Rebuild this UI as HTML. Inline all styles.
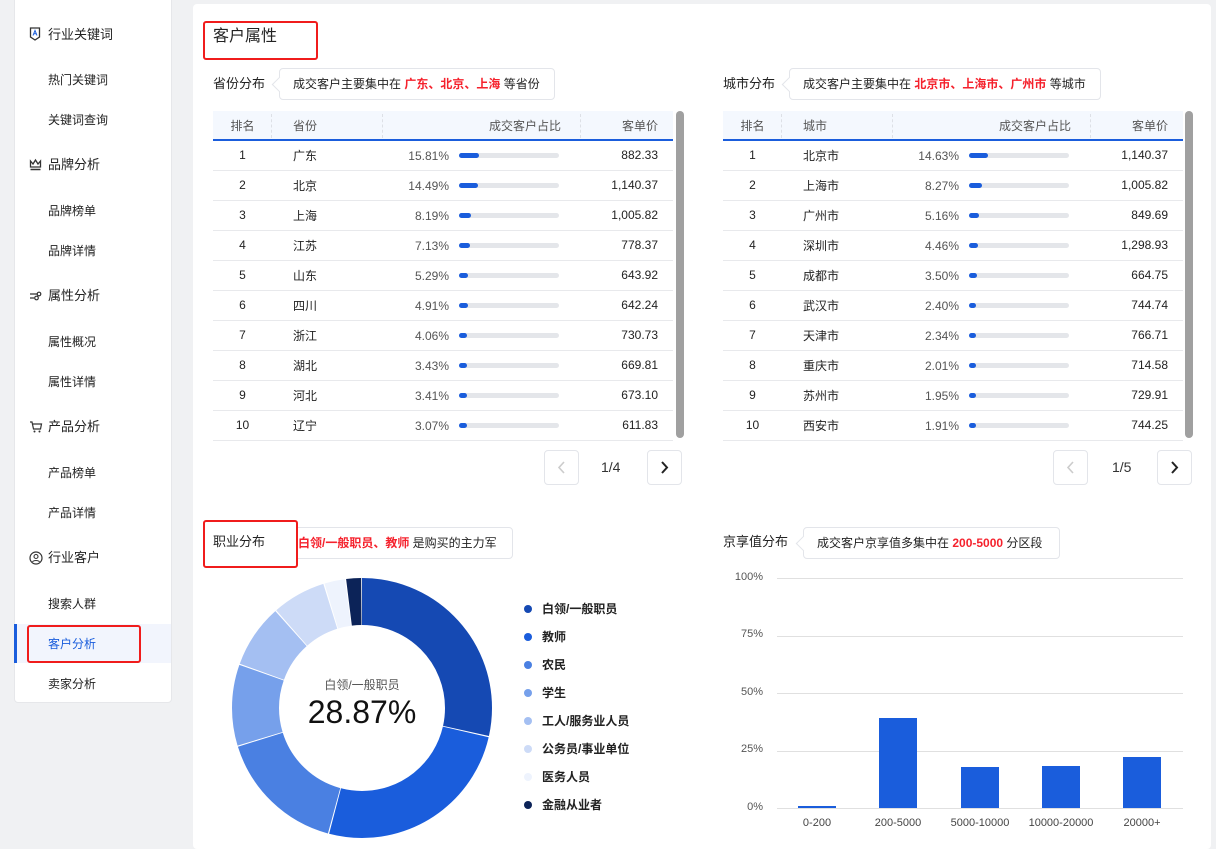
<!DOCTYPE html>
<html><head><meta charset="utf-8">
<style>
*{margin:0;padding:0;box-sizing:border-box}
body{width:1216px;height:840px;background:#f0f1f3;font-family:"Liberation Sans","Noto Sans CJK SC",sans-serif;color:#222;position:relative;overflow:hidden;font-size:12px}
.abs{position:absolute}
.side{position:absolute;left:14px;top:-4px;width:158px;height:707px;background:#fff;border-radius:4px;border:1px solid #e6e7ea}
.g{position:absolute;left:48px;font-size:13px;color:#222;line-height:16px}
.s{position:absolute;left:48px;font-size:12px;color:#222;line-height:16px}
.ic{position:absolute;left:30px;font-size:12px;color:#222;line-height:16px}
.main{position:absolute;left:193px;top:4px;width:1018px;height:845px;background:#fff;border-radius:4px}
.red{position:absolute;border:2px solid #f01c1c;border-radius:3px}
.lab{position:absolute;font-size:13px;color:#222;line-height:16px}
.tip{position:absolute;height:32px;border:1px solid #e3e5ea;border-radius:4px;background:#fff;font-size:12px;line-height:30px;padding-left:13px;color:#222;white-space:nowrap}
.tip:before{content:"";position:absolute;left:-6px;top:10px;width:10px;height:10px;background:#fff;border-left:1px solid #e3e5ea;border-bottom:1px solid #e3e5ea;transform:rotate(45deg)}
.tip b{color:#f5222d;font-weight:bold}
table{border-collapse:collapse;position:absolute;table-layout:fixed;font-size:12px}
th{height:29px;background:#f4f8fe;font-weight:normal;color:#555;border-bottom:2px solid #1a5ddc;position:relative}
td{height:30px;border-bottom:1px solid #e8e9ec;color:#222}
th.sep:after{content:"";position:absolute;right:0;top:3px;height:24px;border-right:1px dashed #dde0e6}
.c0{text-align:center}
.c1{text-align:left;padding-left:21px}
.c2{text-align:right;padding-right:20px}
.c3{text-align:right;padding-right:15px}
td.c2{padding:0;position:relative}
.pct{position:absolute;right:132px;top:8px;color:#555}
.bar{position:absolute;left:76px;top:12px;width:100px;height:5px;background:#e4e6ea;border-radius:3px}
.bar i{display:block;height:5px;background:#1a5ddc;border-radius:3px}
.sb{position:absolute;width:8px;background:#a0a0a0;border-radius:4px}
.pg{position:absolute;width:35px;height:35px;border:1px solid #e3e5ea;border-radius:4px;background:#fff}
.pgt{position:absolute;font-size:14px;color:#333}
.leg{position:absolute;left:524px;font-size:12px;font-weight:bold;color:#222;line-height:14px}
.leg i{position:absolute;left:0;top:3px;width:8px;height:8px;border-radius:50%}
.leg span{margin-left:18px}
.yl{position:absolute;width:50px;text-align:right;font-size:11px;color:#555;left:713px}
.gl{position:absolute;left:777px;width:406px;height:1px;background:#e0e0e0}
.xb{position:absolute;width:38px;background:#1a5ddc}
.xl{position:absolute;width:90px;text-align:center;font-size:11px;color:#444;top:817px}
</style></head><body>
<div class="side"></div>
<svg class="abs" style="left:29px;top:27px" width="12" height="14" viewBox="0 0 12 14"><path d="M1.5 1h9v9l-4.5 3-4.5-3z" fill="none" stroke="#333" stroke-width="1.3"/><path d="M4 8.5l2-5 2 5M4.8 6.8h2.4" fill="none" stroke="#1a5ddc" stroke-width="1"/></svg>
<div class="g" style="top:27px">行业关键词</div>
<div class="s" style="top:72px">热门关键词</div>
<div class="s" style="top:112px">关键词查询</div>
<svg class="abs" style="left:29px;top:158px" width="13" height="13" viewBox="0 0 13 13"><path d="M1.5 3l2.5 3 2.5-4 2.5 4 2.5-3v6h-10z" fill="none" stroke="#333" stroke-width="1.3"/><path d="M1.5 11.5h10" stroke="#333" stroke-width="1.5"/></svg>
<div class="g" style="top:157px">品牌分析</div>
<div class="s" style="top:203px">品牌榜单</div>
<div class="s" style="top:243px">品牌详情</div>
<svg class="abs" style="left:29px;top:290px" width="13" height="12" viewBox="0 0 13 12"><path d="M1 4h7M1 8h4" stroke="#333" stroke-width="1.3"/><circle cx="10" cy="4" r="1.8" fill="none" stroke="#333" stroke-width="1.2"/><circle cx="7.5" cy="8" r="1.8" fill="none" stroke="#333" stroke-width="1.2"/></svg>
<div class="g" style="top:288px">属性分析</div>
<div class="s" style="top:334px">属性概况</div>
<div class="s" style="top:374px">属性详情</div>
<svg class="abs" style="left:29px;top:420px" width="14" height="14" viewBox="0 0 14 14"><path d="M1 2h2l1.5 7h7l1-5h-9" fill="none" stroke="#333" stroke-width="1.2"/><circle cx="5.5" cy="11.5" r="1" fill="#333"/><circle cx="10.5" cy="11.5" r="1" fill="#333"/></svg>
<div class="g" style="top:419px">产品分析</div>
<div class="s" style="top:465px">产品榜单</div>
<div class="s" style="top:505px">产品详情</div>
<svg class="abs" style="left:29px;top:551px" width="14" height="14" viewBox="0 0 14 14"><circle cx="7" cy="7" r="6" fill="none" stroke="#333" stroke-width="1.2"/><circle cx="7" cy="5.5" r="2" fill="none" stroke="#333" stroke-width="1.1"/><path d="M3.5 11c1-2 6-2 7 0" fill="none" stroke="#333" stroke-width="1.1"/></svg>
<div class="g" style="top:550px">行业客户</div>
<div class="s" style="top:596px">搜索人群</div>
<div class="abs" style="left:15px;top:624px;width:156px;height:39px;background:#f2f5fd"></div>
<div class="abs" style="left:14px;top:624px;width:3px;height:39px;background:#1a5ddc"></div>
<div class="s" style="top:636px;color:#1a5ddc">客户分析</div>
<div class="red" style="left:27px;top:625px;width:114px;height:38px"></div>
<div class="s" style="top:676px">卖家分析</div>

<div class="main"></div>
<div class="abs" style="left:213px;top:28px;font-size:16px;line-height:18px">客户属性</div>
<div class="red" style="left:203px;top:21px;width:115px;height:39px"></div>

<div class="lab" style="left:213px;top:76px">省份分布</div>
<div class="tip" style="left:279px;top:68px;width:276px">成交客户主要集中在 <b>广东、北京、上海</b> 等省份</div>
<div class="lab" style="left:723px;top:76px">城市分布</div>
<div class="tip" style="left:789px;top:68px;width:312px">成交客户主要集中在 <b>北京市、上海市、广州市</b> 等城市</div>

<table style="left:213px;top:111px;width:460px">
<colgroup><col style="width:59px"><col style="width:111px"><col style="width:198px"><col style="width:92px"></colgroup>
<tr><th class="c0 sep">排名</th><th class="c1 sep">省份</th><th class="c2 sep">成交客户占比</th><th class="c3">客单价</th></tr>
<tr><td class="c0">1</td><td class="c1">广东</td><td class="c2"><span class="pct">15.81%</span><span class="bar"><i style="width:20px"></i></span></td><td class="c3">882.33</td></tr>
<tr><td class="c0">2</td><td class="c1">北京</td><td class="c2"><span class="pct">14.49%</span><span class="bar"><i style="width:19px"></i></span></td><td class="c3">1,140.37</td></tr>
<tr><td class="c0">3</td><td class="c1">上海</td><td class="c2"><span class="pct">8.19%</span><span class="bar"><i style="width:12px"></i></span></td><td class="c3">1,005.82</td></tr>
<tr><td class="c0">4</td><td class="c1">江苏</td><td class="c2"><span class="pct">7.13%</span><span class="bar"><i style="width:11px"></i></span></td><td class="c3">778.37</td></tr>
<tr><td class="c0">5</td><td class="c1">山东</td><td class="c2"><span class="pct">5.29%</span><span class="bar"><i style="width:9px"></i></span></td><td class="c3">643.92</td></tr>
<tr><td class="c0">6</td><td class="c1">四川</td><td class="c2"><span class="pct">4.91%</span><span class="bar"><i style="width:9px"></i></span></td><td class="c3">642.24</td></tr>
<tr><td class="c0">7</td><td class="c1">浙江</td><td class="c2"><span class="pct">4.06%</span><span class="bar"><i style="width:8px"></i></span></td><td class="c3">730.73</td></tr>
<tr><td class="c0">8</td><td class="c1">湖北</td><td class="c2"><span class="pct">3.43%</span><span class="bar"><i style="width:8px"></i></span></td><td class="c3">669.81</td></tr>
<tr><td class="c0">9</td><td class="c1">河北</td><td class="c2"><span class="pct">3.41%</span><span class="bar"><i style="width:8px"></i></span></td><td class="c3">673.10</td></tr>
<tr><td class="c0">10</td><td class="c1">辽宁</td><td class="c2"><span class="pct">3.07%</span><span class="bar"><i style="width:8px"></i></span></td><td class="c3">611.83</td></tr>
</table>
<div class="sb" style="left:676px;top:111px;height:327px"></div>

<table style="left:723px;top:111px;width:460px">
<colgroup><col style="width:59px"><col style="width:111px"><col style="width:198px"><col style="width:92px"></colgroup>
<tr><th class="c0 sep">排名</th><th class="c1 sep">城市</th><th class="c2 sep">成交客户占比</th><th class="c3">客单价</th></tr>
<tr><td class="c0">1</td><td class="c1">北京市</td><td class="c2"><span class="pct">14.63%</span><span class="bar"><i style="width:19px"></i></span></td><td class="c3">1,140.37</td></tr>
<tr><td class="c0">2</td><td class="c1">上海市</td><td class="c2"><span class="pct">8.27%</span><span class="bar"><i style="width:13px"></i></span></td><td class="c3">1,005.82</td></tr>
<tr><td class="c0">3</td><td class="c1">广州市</td><td class="c2"><span class="pct">5.16%</span><span class="bar"><i style="width:10px"></i></span></td><td class="c3">849.69</td></tr>
<tr><td class="c0">4</td><td class="c1">深圳市</td><td class="c2"><span class="pct">4.46%</span><span class="bar"><i style="width:9px"></i></span></td><td class="c3">1,298.93</td></tr>
<tr><td class="c0">5</td><td class="c1">成都市</td><td class="c2"><span class="pct">3.50%</span><span class="bar"><i style="width:8px"></i></span></td><td class="c3">664.75</td></tr>
<tr><td class="c0">6</td><td class="c1">武汉市</td><td class="c2"><span class="pct">2.40%</span><span class="bar"><i style="width:7px"></i></span></td><td class="c3">744.74</td></tr>
<tr><td class="c0">7</td><td class="c1">天津市</td><td class="c2"><span class="pct">2.34%</span><span class="bar"><i style="width:7px"></i></span></td><td class="c3">766.71</td></tr>
<tr><td class="c0">8</td><td class="c1">重庆市</td><td class="c2"><span class="pct">2.01%</span><span class="bar"><i style="width:7px"></i></span></td><td class="c3">714.58</td></tr>
<tr><td class="c0">9</td><td class="c1">苏州市</td><td class="c2"><span class="pct">1.95%</span><span class="bar"><i style="width:7px"></i></span></td><td class="c3">729.91</td></tr>
<tr><td class="c0">10</td><td class="c1">西安市</td><td class="c2"><span class="pct">1.91%</span><span class="bar"><i style="width:7px"></i></span></td><td class="c3">744.25</td></tr>
</table>
<div class="sb" style="left:1185px;top:111px;height:327px"></div>

<div class="pg" style="left:544px;top:450px"><svg width="33" height="33"><path d="M19 11l-5 5.5 5 5.5" fill="none" stroke="#ccc" stroke-width="1.6"/></svg></div>
<div class="pgt" style="left:601px;top:459px">1/4</div>
<div class="pg" style="left:647px;top:450px"><svg width="33" height="33"><path d="M14 11l5 5.5-5 5.5" fill="none" stroke="#222" stroke-width="2"/></svg></div>
<div class="pg" style="left:1053px;top:450px"><svg width="33" height="33"><path d="M19 11l-5 5.5 5 5.5" fill="none" stroke="#ccc" stroke-width="1.6"/></svg></div>
<div class="pgt" style="left:1112px;top:459px">1/5</div>
<div class="pg" style="left:1157px;top:450px"><svg width="33" height="33"><path d="M14 11l5 5.5-5 5.5" fill="none" stroke="#222" stroke-width="2"/></svg></div>

<div class="tip" style="left:279px;top:527px;width:234px;padding-left:18px"><b>白领/一般职员、教师</b> 是购买的主力军</div>
<div class="abs" style="left:270px;top:522px;width:27px;height:44px;background:#fff"></div>
<div class="lab" style="left:213px;top:534px">职业分布</div>
<div class="red" style="left:203px;top:520px;width:95px;height:48px"></div>

<svg class="abs" style="left:232px;top:578px" width="260" height="260" viewBox="0 0 260 260">
<g transform="rotate(-90 130 130)" fill="none" stroke-width="47">
<circle cx="130" cy="130" r="106.5" stroke="#1549b3" stroke-dasharray="190.4 700" stroke-dashoffset="0"/>
<circle cx="130" cy="130" r="106.5" stroke="#1a5ddc" stroke-dasharray="170.3 700" stroke-dashoffset="-191.4"/>
<circle cx="130" cy="130" r="106.5" stroke="#4a80e2" stroke-dasharray="106.7 700" stroke-dashoffset="-362.7"/>
<circle cx="130" cy="130" r="106.5" stroke="#76a0eb" stroke-dasharray="67.3 700" stroke-dashoffset="-470.4"/>
<circle cx="130" cy="130" r="106.5" stroke="#a4bff2" stroke-dasharray="52.5 700" stroke-dashoffset="-538.7"/>
<circle cx="130" cy="130" r="106.5" stroke="#cddbf7" stroke-dasharray="44.5 700" stroke-dashoffset="-592.2"/>
<circle cx="130" cy="130" r="106.5" stroke="#eef3fd" stroke-dasharray="17.1 700" stroke-dashoffset="-637.7"/>
<circle cx="130" cy="130" r="106.5" stroke="#0c2358" stroke-dasharray="12.4 700" stroke-dashoffset="-655.8"/>
</g></svg>
<div class="abs" style="left:262px;top:676px;width:200px;text-align:center;font-size:12px;color:#555">白领/一般职员</div>
<div class="abs" style="left:242px;top:692px;width:240px;text-align:center;font-size:32px;color:#111;line-height:40px">28.87%</div>

<div class="leg" style="top:602px"><i style="background:#1549b3"></i><span>白领/一般职员</span></div>
<div class="leg" style="top:630px"><i style="background:#1a5ddc"></i><span>教师</span></div>
<div class="leg" style="top:658px"><i style="background:#4a80e2"></i><span>农民</span></div>
<div class="leg" style="top:686px"><i style="background:#76a0eb"></i><span>学生</span></div>
<div class="leg" style="top:714px"><i style="background:#a4bff2"></i><span>工人/服务业人员</span></div>
<div class="leg" style="top:742px"><i style="background:#cddbf7"></i><span>公务员/事业单位</span></div>
<div class="leg" style="top:770px"><i style="background:#eef3fd"></i><span>医务人员</span></div>
<div class="leg" style="top:798px"><i style="background:#0c2358"></i><span>金融从业者</span></div>

<div class="lab" style="left:723px;top:534px">京享值分布</div>
<div class="tip" style="left:803px;top:527px;width:257px">成交客户京享值多集中在 <b>200-5000</b> 分区段</div>

<div class="yl" style="top:571px">100%</div><div class="gl" style="top:578px"></div>
<div class="yl" style="top:628px">75%</div><div class="gl" style="top:636px"></div>
<div class="yl" style="top:686px">50%</div><div class="gl" style="top:693px"></div>
<div class="yl" style="top:743px">25%</div><div class="gl" style="top:751px"></div>
<div class="yl" style="top:801px">0%</div><div class="gl" style="top:808px"></div>
<div class="xb" style="left:798px;top:806px;height:2px"></div>
<div class="xb" style="left:879px;top:718px;height:90px"></div>
<div class="xb" style="left:961px;top:767px;height:41px"></div>
<div class="xb" style="left:1042px;top:766px;height:42px"></div>
<div class="xb" style="left:1123px;top:757px;height:51px"></div>
<div class="xl" style="left:772px">0-200</div>
<div class="xl" style="left:853px">200-5000</div>
<div class="xl" style="left:935px">5000-10000</div>
<div class="xl" style="left:1016px">10000-20000</div>
<div class="xl" style="left:1097px">20000+</div>
</body></html>
